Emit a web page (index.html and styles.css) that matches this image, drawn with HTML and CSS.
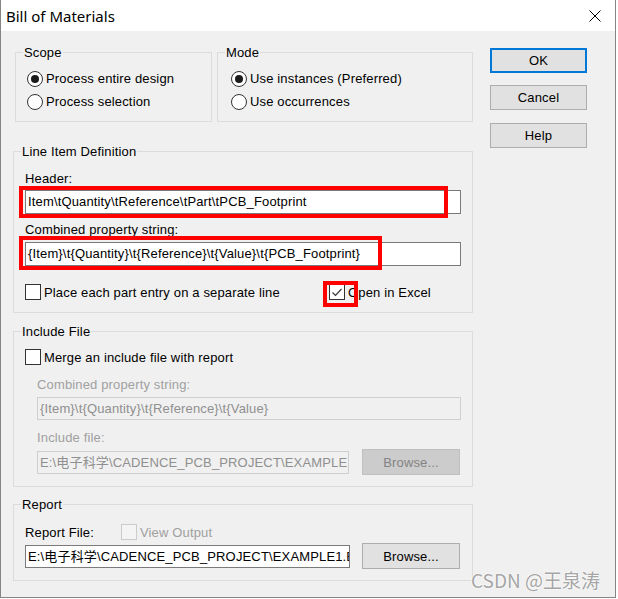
FILE: index.html
```html
<!DOCTYPE html>
<html>
<head>
<meta charset="utf-8">
<title>Bill of Materials</title>
<link rel="stylesheet" href="styles.css">
</head>
<body>
<div class="window">
  <div class="titlebar">
    <span class="title">Bill of Materials</span>
    <svg class="close" width="12" height="12" viewBox="0 0 12 12"><path d="M0.5 0.5L11.5 11.5M11.5 0.5L0.5 11.5" stroke="#000" stroke-width="1" fill="none"/></svg>
  </div>
  <div class="content">
    <div class="main">
      <div class="toprow">
        <div class="group scope">
          <div class="gtitle">Scope</div>
          <div class="opts scope-opts">
            <div class="opt"><span class="radio on"></span>Process entire design</div>
            <div class="opt"><span class="radio"></span>Process selection</div>
          </div>
        </div>
        <div class="group mode">
          <div class="gtitle">Mode</div>
          <div class="opts mode-opts">
            <div class="opt"><span class="radio on"></span>Use instances (Preferred)</div>
            <div class="opt"><span class="radio"></span>Use occurrences</div>
          </div>
        </div>
      </div>

      <div class="group lineitem">
        <div class="gtitle">Line Item Definition</div>
        <div class="gbody">
          <div class="lbl">Header:</div>
          <div class="field li-field hdr-field">Item\tQuantity\tReference\tPart\tPCB_Footprint</div>
          <div class="lbl prop-lbl">Combined property string:</div>
          <div class="field li-field prop-field">{Item}\t{Quantity}\t{Reference}\t{Value}\t{PCB_Footprint}</div>
          <div class="checks">
            <div class="chk-item wide"><span class="check"></span>Place each part entry on a separate line</div>
            <div class="chk-item"><span class="check"><svg width="14" height="14" viewBox="0 0 14 14"><path d="M2.5 7.5L5.5 10.5L11.5 4" stroke="#3a3a3a" stroke-width="1.2" fill="none"/></svg></span>Open in Excel</div>
          </div>
        </div>
      </div>

      <div class="group include">
        <div class="gtitle">Include File</div>
        <div class="gbody">
          <div class="chk-item"><span class="check"></span>Merge an include file with report</div>
          <div class="dlbl inc-lbl1">Combined property string:</div>
          <div class="dfield inc-prop">{Item}\t{Quantity}\t{Reference}\t{Value}</div>
          <div class="dlbl inc-lbl2">Include file:</div>
          <div class="filerow inc-row">
            <div class="dfield inc-file">E:\电子科学\CADENCE_PCB_PROJECT\EXAMPLE1.BOM</div>
            <button class="browse disabled">Browse...</button>
          </div>
        </div>
      </div>

      <div class="group report">
        <div class="gtitle">Report</div>
        <div class="gbody">
          <div class="rrow1">
            <span class="rlabel">Report File:</span>
            <span class="check disabled"></span><span class="dtext">View Output</span>
          </div>
          <div class="filerow rrow2">
            <div class="field rep-file">E:\电子科学\CADENCE_PCB_PROJECT\EXAMPLE1.BOM</div>
            <button class="browse">Browse...</button>
          </div>
        </div>
      </div>
    </div>

    <div class="side">
      <button class="btn ok">OK</button>
      <button class="btn cancel">Cancel</button>
      <button class="btn help">Help</button>
    </div>
  </div>

  <div class="mark mark-header"></div>
  <div class="mark mark-prop"></div>
  <div class="mark mark-excel"></div>
  <div class="wm">CSDN @王泉涛</div>
</div>
</body>
</html>
```

FILE: styles.css
```css
* { box-sizing: border-box; }

body {
  margin: 0;
  background: #fff;
  font-family: "Liberation Sans", Arial, "Noto Sans CJK SC", sans-serif;
  font-size: 13px;
  letter-spacing: 0.15px;
  color: #000;
}

.window {
  position: relative;
  width: 616px;
  height: 598px;
  border: 1px solid #858585;
  border-top: none;
  display: flex;
  flex-direction: column;
  overflow: hidden;
}

.titlebar {
  flex: none;
  height: 31px;
  background: #fff;
  display: flex;
  align-items: center;
  justify-content: space-between;
  padding: 1px 14px 0 5px;
}

.title {
  font-family: "Noto Sans", "Open Sans", sans-serif;
  font-size: 15px;
  letter-spacing: 0;
}

.close { display: block; }

.content {
  flex: 1;
  background: #f0f0f0;
  display: flex;
}

.main {
  width: 460px;
  margin-left: 12px;
  padding-top: 21px;
}

.side {
  width: 97px;
  margin-left: 17px;
  padding-top: 17px;
  display: flex;
  flex-direction: column;
}

/* group boxes */
.group { border: 1px solid #dcdcdc; }

.gtitle {
  width: fit-content;
  margin: -8px 0 0 7px;
  padding: 0 1px;
  background: #f0f0f0;
  height: 15px;
  line-height: 15px;
}

.toprow {
  display: flex;
  gap: 5px;
  margin-left: 2px;
}

.scope { width: 197px; height: 70px; }
.mode { width: 256px; height: 70px; }

.scope-opts { padding: 7px 0 0 11px; }
.mode-opts { padding: 7px 0 0 13px; }

.opt {
  display: flex;
  align-items: center;
  height: 23px;
  white-space: nowrap;
}

.radio {
  flex: none;
  width: 16px;
  height: 16px;
  border-radius: 50%;
  border: 1px solid #333;
  background: #fff;
  margin-right: 3px;
  display: flex;
  align-items: center;
  justify-content: center;
}

.radio.on::after {
  content: "";
  width: 8px;
  height: 8px;
  border-radius: 50%;
  background: #1b1b1b;
}

.lbl { height: 15px; line-height: 15px; }

.field {
  height: 24px;
  border: 1px solid #7a7a7a;
  background: #fff;
  line-height: 22px;
  padding: 0 2px;
  white-space: nowrap;
  overflow: hidden;
}

.lineitem { height: 162px; margin-top: 29px; }
.lineitem .gbody { padding: 12px 11px 0 11px; }
.li-field { width: 436px; }
.hdr-field { margin-top: 4px; }
.prop-lbl { margin-top: 8px; }
.prop-field { margin-top: 5px; }

.checks {
  display: flex;
  align-items: center;
  height: 16px;
  margin-top: 18px;
}

.chk-item {
  display: flex;
  align-items: center;
  height: 16px;
  white-space: nowrap;
}

.chk-item.wide { width: 304px; }

.check {
  flex: none;
  width: 16px;
  height: 16px;
  border: 1px solid #333;
  background: #fff;
  margin-right: 3px;
  display: flex;
  align-items: center;
  justify-content: center;
}

.check.disabled {
  border-color: #cccccc;
  background: #f4f4f4;
}

.include { height: 156px; margin-top: 18px; }
.include .gbody { padding: 10px 11px 0 11px; }

.dlbl {
  color: #a0a0a0;
  margin-left: 12px;
  height: 15px;
  line-height: 15px;
}

.inc-lbl1 { margin-top: 12px; }
.inc-lbl2 { margin-top: 10px; }

.dfield {
  height: 23px;
  border: 1px solid #cfcfcf;
  background: #f0f0f0;
  color: #8f8f8f;
  line-height: 21px;
  padding: 0 2px;
  white-space: nowrap;
  overflow: hidden;
}

.inc-prop { margin: 5px 0 0 12px; width: 424px; }

.filerow {
  display: flex;
  align-items: center;
  height: 26px;
}

.inc-row { margin: 4px 0 0 12px; gap: 13px; }
.inc-file { width: 312px; }

.browse {
  width: 98px;
  height: 26px;
  padding: 0;
  border: 1px solid #adadad;
  background: #e1e1e1;
  font-family: "Liberation Sans", Arial, sans-serif;
  font-size: 13px;
  letter-spacing: 0.15px;
  color: #000;
}

.browse.disabled {
  background: #cccccc;
  border-color: #bfbfbf;
  color: #838383;
}

.report { height: 77px; margin-top: 17px; }
.report .gbody { padding: 12px 11px 0 11px; }

.rrow1 {
  display: flex;
  align-items: center;
  height: 16px;
}

.rlabel { width: 96px; }
.dtext { color: #a0a0a0; }

.rrow2 { margin-top: 3px; gap: 12px; }
.rep-file { width: 325px; height: 23px; line-height: 21px; }

/* right buttons */
.btn {
  width: 97px;
  height: 25px;
  padding: 0;
  border: 1px solid #adadad;
  background: #e1e1e1;
  font-family: "Liberation Sans", Arial, sans-serif;
  font-size: 13px;
  letter-spacing: 0.15px;
  color: #000;
}

.btn.ok { border: 2px solid #0078d7; }
.btn.cancel { margin-top: 12px; }
.btn.help { margin-top: 13px; }

/* annotation overlays */
.mark {
  position: absolute;
  border: 4px solid #ff0000;
}

.mark-header { left: 18px; top: 186px; width: 429px; height: 32px; }
.mark-prop { left: 18px; top: 236px; width: 363px; height: 34px; }
.mark-excel { left: 322px; top: 281px; width: 35px; height: 26px; }

.wm {
  position: absolute;
  left: 470px;
  top: 568px;
  font-family: "Noto Sans CJK SC", "Noto Sans", sans-serif;
  font-size: 19px;
  line-height: 24px;
  letter-spacing: 0;
  color: #a6a6a6;
  text-shadow: 0 0 2px #fff, 0 0 2px #fff;
}
```
